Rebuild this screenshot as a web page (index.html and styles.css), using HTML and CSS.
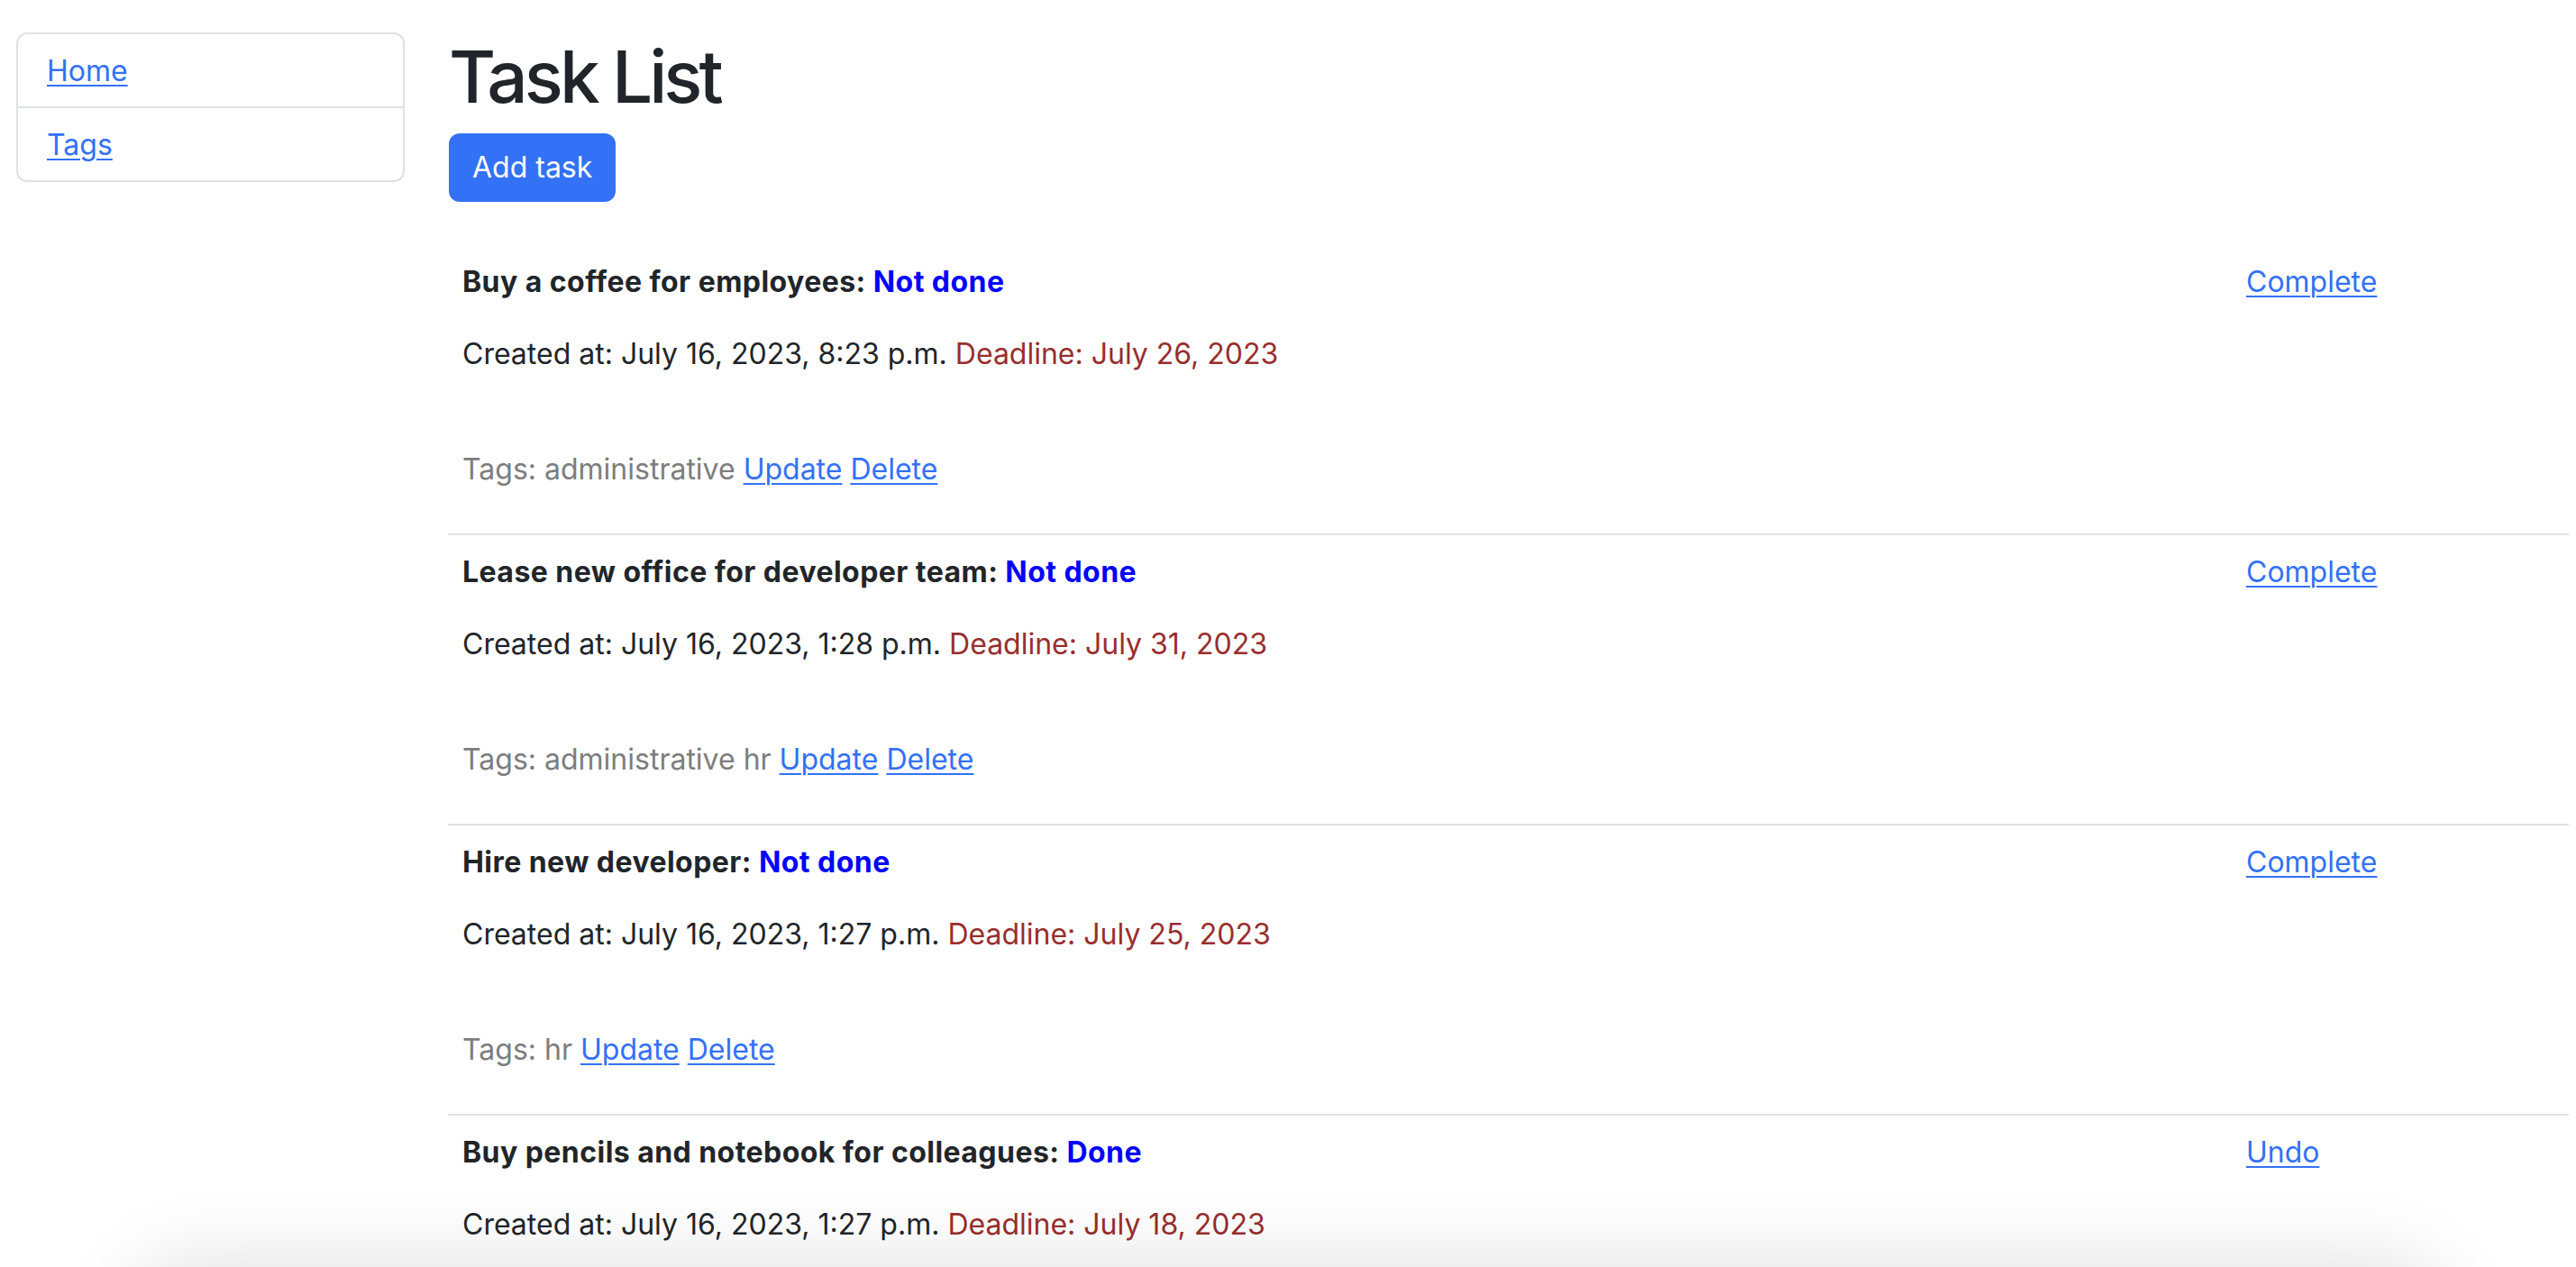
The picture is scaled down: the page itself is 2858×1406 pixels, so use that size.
FILE: index.html
```html
<!DOCTYPE html>
<html lang="en">
<head>
<meta charset="utf-8">
<title>Task List</title>
<link rel="stylesheet" href="styles.css">
</head>
<body>
<div class="page">
  <aside class="sidebar">
    <ul class="nav-list">
      <li class="nav-item"><a href="#">Home</a></li>
      <li class="nav-item"><a href="#">Tags</a></li>
    </ul>
  </aside>
  <main class="main">
    <h1 class="title">Task List</h1>
    <a class="btn-primary" href="#">Add task</a>
    <div class="task-list">
      <div class="task-row">
        <div class="task-info">
          <div class="task-name">Buy a coffee for employees: <span class="status">Not done</span></div>
          <p class="task-dates">Created at: July 16, 2023, 8:23 p.m. <span class="deadline">Deadline: July 26, 2023</span></p>
          <p class="task-blank"></p>
          <p class="task-tags">Tags: administrative <a href="#">Update</a> <a href="#">Delete</a></p>
        </div>
        <div class="task-action"><a href="#">Complete</a></div>
      </div>
      <div class="task-row">
        <div class="task-info">
          <div class="task-name">Lease new office for developer team: <span class="status">Not done</span></div>
          <p class="task-dates">Created at: July 16, 2023, 1:28 p.m. <span class="deadline">Deadline: July 31, 2023</span></p>
          <p class="task-blank"></p>
          <p class="task-tags">Tags: administrative hr <a href="#">Update</a> <a href="#">Delete</a></p>
        </div>
        <div class="task-action"><a href="#">Complete</a></div>
      </div>
      <div class="task-row">
        <div class="task-info">
          <div class="task-name">Hire new developer: <span class="status">Not done</span></div>
          <p class="task-dates">Created at: July 16, 2023, 1:27 p.m. <span class="deadline">Deadline: July 25, 2023</span></p>
          <p class="task-blank"></p>
          <p class="task-tags">Tags: hr <a href="#">Update</a> <a href="#">Delete</a></p>
        </div>
        <div class="task-action"><a href="#">Complete</a></div>
      </div>
      <div class="task-row">
        <div class="task-info">
          <div class="task-name">Buy pencils and notebook for colleagues: <span class="status">Done</span></div>
          <p class="task-dates">Created at: July 16, 2023, 1:27 p.m. <span class="deadline">Deadline: July 18, 2023</span></p>
          <p class="task-blank"></p>
          <p class="task-tags">Tags: administrative <a href="#">Update</a> <a href="#">Delete</a></p>
        </div>
        <div class="task-action"><a href="#">Undo</a></div>
      </div>
    </div>
  </main>
</div>
<div class="bottom-shadow"></div>
</body>
</html>
```

FILE: styles.css
```css
html, body {
  margin: 0;
  padding: 0;
  background: #ffffff;
}

body {
  font-family: Inter, "Liberation Sans", sans-serif;
  font-size: 32px;
  line-height: 48px;
  color: #212529;
}

a {
  color: #3371f6;
  text-decoration: underline;
  text-decoration-thickness: 2px;
  text-underline-offset: 4px;
}

.page {
  display: flex;
  align-items: flex-start;
  padding-top: 36px;
}

.sidebar {
  width: 431px;
  margin-left: 18px;
  flex: none;
}

.nav-list {
  list-style: none;
  margin: 0;
  padding: 0;
  border: 2px solid #dee2e6;
  border-radius: 12px;
}

.nav-item {
  padding: 17px 32px 15px;
}

.nav-item + .nav-item {
  border-top: 2px solid #dee2e6;
}

.main {
  margin-left: 49px;
  width: 2352px;
  flex: none;
}

.title {
  margin: 0 0 16px 0;
  padding-top: 2px;
  font-size: 80px;
  line-height: 94px;
  font-weight: 500;
  letter-spacing: -4px;
}

.btn-primary {
  display: inline-block;
  background: #3371f6;
  color: #ffffff;
  text-decoration: none;
  padding: 14px 26px;
  line-height: 48px;
  border-radius: 12px;
}

.task-list {
  margin-top: 48px;
  margin-left: -1px;
}

.task-row {
  display: grid;
  grid-template-columns: 1979px 1fr;
  border-bottom: 2px solid #dee2e6;
}

.task-info,
.task-action {
  padding: 17px 16px 15px;
}

.task-name {
  font-weight: 700;
  letter-spacing: 0.45px;
}

.status {
  color: #0000ff;
}

.task-dates,
.task-tags {
  margin: 32px 0 0 0;
}

.task-blank {
  margin: 0;
  height: 48px;
}

.task-tags {
  color: #7d7d7d;
  margin-bottom: 32px;
}

.deadline {
  color: #982e2e;
}

.bottom-shadow {
  position: fixed;
  left: 160px;
  right: 160px;
  top: 1420px;
  height: 200px;
  border-radius: 60px;
  background: #dcdcdc;
  box-shadow: 0 0 90px 20px rgba(0, 0, 0, 0.12);
}
```
